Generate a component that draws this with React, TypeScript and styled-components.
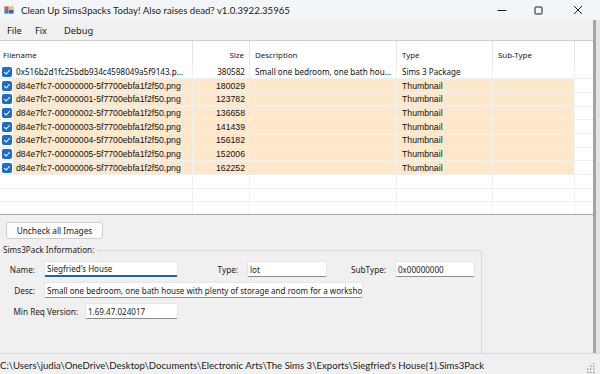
import React from 'react';
import styled, { createGlobalStyle } from 'styled-components';

const UI = `"Noto Sans", "Open Sans", sans-serif`;
const TITLE = `Lato, "Noto Sans", sans-serif`;
const LIST = `"Liberation Sans", Arial, sans-serif`;

const Global = createGlobalStyle`
  html, body { margin: 0; padding: 0; }
  body { width: 600px; height: 374px; overflow: hidden; background: #f0f0f0; }
  * { box-sizing: border-box; }
`;

const Window = styled.div`
  width: 600px;
  height: 374px;
  display: flex;
  flex-direction: column;
  background: #f0f0f0;
  font-family: ${UI};
  color: #1a1a1a;
`;

const TitleBar = styled.div`
  height: 20px;
  flex: none;
  display: flex;
  align-items: center;
  background: #f3f6f9;
  padding-left: 4px;
`;

const TitleText = styled.span`
  font-family: ${TITLE};
  font-size: 9.6px;
  margin-left: 7px;
  white-space: nowrap;
  flex: 1;
`;

const Controls = styled.div`
  display: flex;
  align-items: center;
  height: 100%;
`;

const CtrlBtn = styled.div<{ $w: number }>`
  width: ${(p) => p.$w}px;
  height: 100%;
  display: flex;
  align-items: center;
  justify-content: center;
`;

const Body = styled.div`
  flex: 1;
  display: flex;
  min-height: 0;
`;

const Main = styled.div`
  width: 593px;
  display: flex;
  flex-direction: column;
`;

const RightEdge = styled.div`
  flex: 1;
  border-left: 3px solid #a4a4a4;
  background: #e4e4e4;
`;

const MenuBar = styled.div`
  height: 20px;
  display: flex;
  align-items: center;
  padding-left: 7px;
  gap: 13px;
  font-size: 9.3px;
`;

const MenuItem = styled.span<{ $gap?: number }>`
  margin-right: ${(p) => p.$gap ?? 0}px;
`;

const ListView = styled.div`
  height: 175px;
  background: #fff;
  border-top: 1px solid #cdcdcd;
  border-bottom: 1px solid #a8a8a8;
  overflow: hidden;
`;

const COLS = '193px 57px 147px 96px 82px 1fr';

const HeaderRow = styled.div`
  display: grid;
  grid-template-columns: ${COLS};
  height: 24.5px;
`;

const HeaderCell = styled.div<{ $align?: 'left' | 'right'; $last?: boolean }>`
  display: flex;
  align-items: center;
  padding-top: 3px;
  justify-content: ${(p) => (p.$align === 'right' ? 'flex-end' : 'flex-start')};
  padding-left: ${(p) => (p.$align === 'right' ? 0 : 5)}px;
  padding-right: ${(p) => (p.$align === 'right' ? 5 : 0)}px;
  border-right: ${(p) => (p.$last ? 'none' : '1px solid #e5e5e5')};
  font-size: 7.9px;
  color: #1a1a1a;
  &:first-child { padding-left: 3px; }
`;

const Row = styled.div`
  display: grid;
  grid-template-columns: 13px 180px 57px 147px 96px 82px 1fr;
  height: 13.7px;
`;

const Cell = styled.div<{ $hl?: boolean; $align?: 'left' | 'right'; $list?: boolean; $noRight?: boolean }>`
  background: ${(p) => (p.$hl ? '#fde8cc' : '#fff')};
  border-right: ${(p) => (p.$noRight ? 'none' : '1px solid #f0f0f0')};
  border-bottom: 1px solid #f0f0f0;
  display: flex;
  align-items: center;
  overflow: hidden;
  white-space: nowrap;
  justify-content: ${(p) => (p.$align === 'right' ? 'flex-end' : 'flex-start')};
  padding-left: ${(p) => (p.$align === 'right' ? 0 : 5)}px;
  padding-right: ${(p) => (p.$align === 'right' ? 4 : 0)}px;
  font-family: ${(p) => (p.$list ? LIST : UI)};
  font-size: ${(p) => (p.$list ? '8.7px' : '8.1px')};
  color: #111;
`;

const CheckCell = styled.div`
  background: #fff;
  border-bottom: 1px solid #f0f0f0;
  display: flex;
  align-items: center;
  padding-left: 2px;
`;

const NameCell = styled(Cell)`
  padding-left: 3px;
`;

const CheckBox = styled.div`
  width: 10px;
  height: 10px;
  border-radius: 2px;
  background: #1d6cc5;
  display: flex;
  align-items: center;
  justify-content: center;
`;

const Bottom = styled.div`
  flex: 1;
  display: flex;
  flex-direction: column;
  align-items: flex-start;
  padding-top: 7px;
`;

const Button = styled.div`
  margin-left: 6px;
  width: 97px;
  height: 16.5px;
  border: 1px solid #cfcfcf;
  border-radius: 3px;
  background: #fdfdfd;
  display: flex;
  align-items: center;
  justify-content: center;
  font-size: 8.3px;
`;

const GroupBox = styled.div`
  position: relative;
  margin-top: 11.5px;
  width: 482px;
  flex: 1;
  border-top: 1px solid #dcdcdc;
  border-right: 1px solid #dcdcdc;
  padding-top: 10px;
  display: flex;
  flex-direction: column;
  gap: 5px;
`;

const Legend = styled.span`
  position: absolute;
  left: 3px;
  top: -7px;
  padding-right: 3px;
  background: #f0f0f0;
  font-size: 8.2px;
  line-height: 12px;
`;

const FieldRow = styled.div`
  display: flex;
  align-items: center;
  height: 16px;
`;

const Label = styled.span<{ $w: number }>`
  width: ${(p) => p.$w}px;
  text-align: right;
  font-size: 8.2px;
  flex: none;
`;

const TextBox = styled.div<{ $w: number; $ml: number; $focus?: boolean }>`
  width: ${(p) => p.$w}px;
  margin-left: ${(p) => p.$ml}px;
  height: 16px;
  flex: none;
  background: #fff;
  border: 1px solid #e6e6e6;
  border-bottom: ${(p) => (p.$focus ? '2px solid #1a64b8' : '1px solid #8c8c8c')};
  border-radius: 2px;
  padding-left: 2px;
  display: flex;
  align-items: center;
  font-size: 8.05px;
  white-space: nowrap;
  overflow: hidden;
`;

const StatusBar = styled.div`
  height: 21px;
  flex: none;
  border-top: 1px solid #dadada;
  display: flex;
  align-items: center;
  padding-top: 2px;
  font-family: ${TITLE};
  font-size: 9.6px;
  white-space: nowrap;
  position: relative;
`;

const Grip = styled.svg`
  position: absolute;
  right: 5px;
  bottom: 1px;
`;

const Check = () => (
  <svg width="8" height="8" viewBox="0 0 8 8">
    <path d="M1.3 4.2 L3.2 6 L6.8 2" fill="none" stroke="#fff" strokeWidth="1.1" />
  </svg>
);

const AppIcon = () => (
  <svg width="10" height="10" viewBox="0 0 10 10">
    <rect x="0" y="1" width="10" height="8" fill="#d8d8d8" />
    <rect x="0.5" y="1.5" width="4" height="3.5" fill="#e8582e" />
    <rect x="5" y="1.5" width="4.5" height="3.5" fill="#f2c14a" />
    <rect x="0.5" y="5" width="4" height="3.5" fill="#3d7fd6" />
    <rect x="5" y="5" width="4.5" height="3.5" fill="#2f65c0" />
  </svg>
);

type Item = { name: string; size: string; desc: string; type: string; hl: boolean };

const items: Item[] = [
  { name: '0x516b2d1fc25bdb934c4598049a5f9143.p...', size: '380582', desc: 'Small one bedroom, one bath hou...', type: 'Sims 3 Package', hl: false },
  { name: 'd84e7fc7-00000000-5f7700ebfa1f2f50.png', size: '180029', desc: '', type: 'Thumbnail', hl: true },
  { name: 'd84e7fc7-00000001-5f7700ebfa1f2f50.png', size: '123782', desc: '', type: 'Thumbnail', hl: true },
  { name: 'd84e7fc7-00000002-5f7700ebfa1f2f50.png', size: '136658', desc: '', type: 'Thumbnail', hl: true },
  { name: 'd84e7fc7-00000003-5f7700ebfa1f2f50.png', size: '141439', desc: '', type: 'Thumbnail', hl: true },
  { name: 'd84e7fc7-00000004-5f7700ebfa1f2f50.png', size: '156182', desc: '', type: 'Thumbnail', hl: true },
  { name: 'd84e7fc7-00000005-5f7700ebfa1f2f50.png', size: '152006', desc: '', type: 'Thumbnail', hl: true },
  { name: 'd84e7fc7-00000006-5f7700ebfa1f2f50.png', size: '162252', desc: '', type: 'Thumbnail', hl: true },
];

export default function App() {
  return (
    <>
      <Global />
      <Window>
        <TitleBar>
          <AppIcon />
          <TitleText>Clean Up Sims3packs Today! Also raises dead? v1.0.3922.35965</TitleText>
          <Controls>
            <CtrlBtn $w={36}>
              <svg width="10" height="10" viewBox="0 0 10 10"><path d="M0.5 5.5 H9.5" stroke="#1a1a1a" strokeWidth="1" /></svg>
            </CtrlBtn>
            <CtrlBtn $w={36}>
              <svg width="9" height="9" viewBox="0 0 9 9"><rect x="1" y="1" width="7" height="7" fill="none" stroke="#1a1a1a" strokeWidth="1" rx="0.5" /></svg>
            </CtrlBtn>
            <CtrlBtn $w={44}>
              <svg width="10" height="10" viewBox="0 0 10 10"><path d="M1 1 L9 9 M9 1 L1 9" stroke="#1a1a1a" strokeWidth="1" /></svg>
            </CtrlBtn>
          </Controls>
        </TitleBar>
        <Body>
          <Main>
            <MenuBar>
              <MenuItem>File</MenuItem>
              <MenuItem $gap={4}>Fix</MenuItem>
              <MenuItem>Debug</MenuItem>
            </MenuBar>
            <ListView>
              <HeaderRow>
                <HeaderCell>Filename</HeaderCell>
                <HeaderCell $align="right">Size</HeaderCell>
                <HeaderCell>Description</HeaderCell>
                <HeaderCell>Type</HeaderCell>
                <HeaderCell>Sub-Type</HeaderCell>
                <HeaderCell $last />
              </HeaderRow>
              {items.map((it, i) => (
                <Row key={i}>
                  <CheckCell>
                    <CheckBox><Check /></CheckBox>
                  </CheckCell>
                  <NameCell $hl={it.hl} $list={it.hl}>{it.name}</NameCell>
                  <Cell $hl={it.hl} $list={it.hl} $align="right">{it.size}</Cell>
                  <Cell $hl={it.hl} $list={it.hl}>{it.desc}</Cell>
                  <Cell $hl={it.hl} $list={it.hl}>{it.type}</Cell>
                  <Cell $hl={it.hl} $list={it.hl} />
                  <Cell $noRight />
                </Row>
              ))}
              {[0, 1, 2].map((i) => (
                <Row key={'e' + i}>
                  <CheckCell />
                  <NameCell />
                  <Cell />
                  <Cell />
                  <Cell />
                  <Cell />
                  <Cell $noRight />
                </Row>
              ))}
            </ListView>
            <Bottom>
              <Button>Uncheck all Images</Button>
              <GroupBox>
                <Legend>Sims3Pack Information:</Legend>
                <FieldRow>
                  <Label $w={35}>Name:</Label>
                  <TextBox $w={134} $ml={9} $focus>Siegfried's House</TextBox>
                  <Label $w={60}>Type:</Label>
                  <TextBox $w={80} $ml={9}>lot</TextBox>
                  <Label $w={59}>SubType:</Label>
                  <TextBox $w={80} $ml={9}>0x00000000</TextBox>
                </FieldRow>
                <FieldRow>
                  <Label $w={35}>Desc:</Label>
                  <TextBox $w={319} $ml={9}>Small one bedroom, one bath house with plenty of storage and room for a workshop</TextBox>
                </FieldRow>
                <FieldRow>
                  <Label $w={78}>Min Req Version:</Label>
                  <TextBox $w={93} $ml={7}>1.69.47.024017</TextBox>
                </FieldRow>
              </GroupBox>
            </Bottom>
          </Main>
          <RightEdge />
        </Body>
        <StatusBar>
          C:\Users\judia\OneDrive\Desktop\Documents\Electronic Arts\The Sims 3\Exports\Siegfried's House{'{1}'}.Sims3Pack
          <Grip width="10" height="10" viewBox="0 0 10 10">
            {[[8, 0], [8, 3], [5, 3], [8, 6], [5, 6], [2, 6], [8, 9], [5, 9], [2, 9]].map(([x, y], i) => (
              <rect key={i} x={x} y={y - 0.5} width="1.5" height="1.5" fill="#a0a0a0" />
            ))}
          </Grip>
        </StatusBar>
      </Window>
    </>
  );
}
